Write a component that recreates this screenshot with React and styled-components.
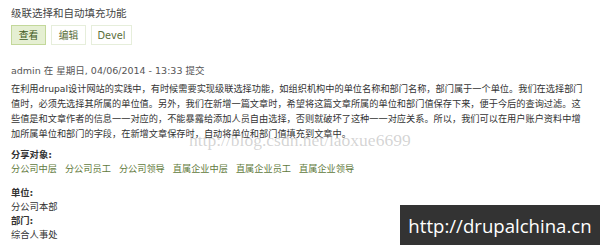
import styled, { createGlobalStyle } from 'styled-components';

const GlobalStyle = createGlobalStyle`
  html, body {
    margin: 0;
    padding: 0;
    background: #fff;
  }
  body {
    width: 600px;
    height: 245px;
    overflow: hidden;
    font-family: "Lucida Grande", "DejaVu Sans", "Noto Sans CJK SC", sans-serif;
    color: #333;
  }
`;

const Page = styled.div`
  position: relative;
  width: 600px;
  height: 245px;
  padding: 6px 11px 0;
  box-sizing: border-box;
  overflow: hidden;
`;

const Title = styled.h2`
  margin: 0;
  font-size: 10.5px;
  line-height: 14px;
  font-weight: normal;
  color: #444;
`;

const Tabs = styled.div`
  margin-top: 5px;
  display: flex;
  gap: 5px;
`;

const Tab = styled.span`
  width: ${({ w }) => w}px;
  height: 20px;
  display: flex;
  align-items: center;
  justify-content: center;
  box-sizing: border-box;
  font-size: 9.8px;
  border: 1px solid ${({ active }) => (active ? '#c3d89a' : '#e6eedb')};
  background: ${({ active }) => (active ? '#e5efd2' : '#fff')};
  color: ${({ active }) => (active ? '#3f5a1a' : '#5a6e3a')};
`;

const Submitted = styled.div`
  margin-top: 19px;
  font-size: 9.5px;
  line-height: 14px;
  color: #555;
`;

const Body = styled.p`
  position: relative;
  margin: 3px 0 0;
  font-size: 9.2px;
  line-height: 15px;
  white-space: nowrap;
  color: #333;
`;

const Watermark = styled.span`
  position: absolute;
  left: 178px;
  top: 51px;
  font-family: "Liberation Serif", serif;
  font-size: 17.5px;
  line-height: 17px;
  color: rgba(160, 160, 160, 0.45);
  pointer-events: none;
`;

const Field = styled.div`
  margin-top: ${({ gap }) => gap}px;
`;

const Label = styled.div`
  font-size: 9.3px;
  line-height: 14px;
  font-weight: bold;
  color: #333;
`;

const Value = styled.div`
  font-size: 9.3px;
  line-height: 14px;
  color: #333;
`;

const TagList = styled.div`
  display: flex;
  gap: 8px;
  font-size: 9.2px;
  line-height: 14px;
`;

const Tag = styled.span`
  color: #5f7a3c;
`;

const Badge = styled.div`
  position: absolute;
  right: 0;
  bottom: 0;
  width: 200px;
  height: 40px;
  background: #333;
  color: #fff;
  display: flex;
  align-items: center;
  justify-content: center;
  font-family: "Open Sans", "Noto Sans", sans-serif;
  font-size: 18.6px;
`;

const lines = [
  '在利用drupal设计网站的实践中，有时候需要实现级联选择功能，如组织机构中的单位名称和部门名称，部门属于一个单位。我们在选择部门',
  '值时，必须先选择其所属的单位值。另外，我们在新增一篇文章时，希望将这篇文章所属的单位和部门值保存下来，便于今后的查询过滤。这',
  '些值是和文章作者的信息一一对应的，不能暴露给添加人员自由选择，否则就破坏了这种一一对应关系。所以，我们可以在用户账户资料中增',
  '加所属单位和部门的字段，在新增文章保存时，自动将单位和部门值填充到文章中。',
];

const tags = ['分公司中层', '分公司员工', '分公司领导', '直属企业中层', '直属企业员工', '直属企业领导'];

export default function App() {
  return (
    <>
      <GlobalStyle />
      <Page>
        <Title>级联选择和自动填充功能</Title>
        <Tabs>
          <Tab active w={35}>查看</Tab>
          <Tab w={35}>编辑</Tab>
          <Tab w={41}>Devel</Tab>
        </Tabs>
        <Submitted>admin 在 星期日, 04/06/2014 - 13:33 提交</Submitted>
        <Body>
          {lines.map((l, i) => (
            <span key={i}>
              {l}
              <br />
            </span>
          ))}
          <Watermark>http://blog.csdn.net/laoxue6699</Watermark>
        </Body>
        <Field gap={7}>
          <Label>分享对象:</Label>
          <TagList>
            {tags.map((t) => (
              <Tag key={t}>{t}</Tag>
            ))}
          </TagList>
        </Field>
        <Field gap={10}>
          <Label>单位:</Label>
          <Value>分公司本部</Value>
          <Label>部门:</Label>
          <Value>综合人事处</Value>
        </Field>
        <Badge>http://drupalchina.cn</Badge>
      </Page>
    </>
  );
}
